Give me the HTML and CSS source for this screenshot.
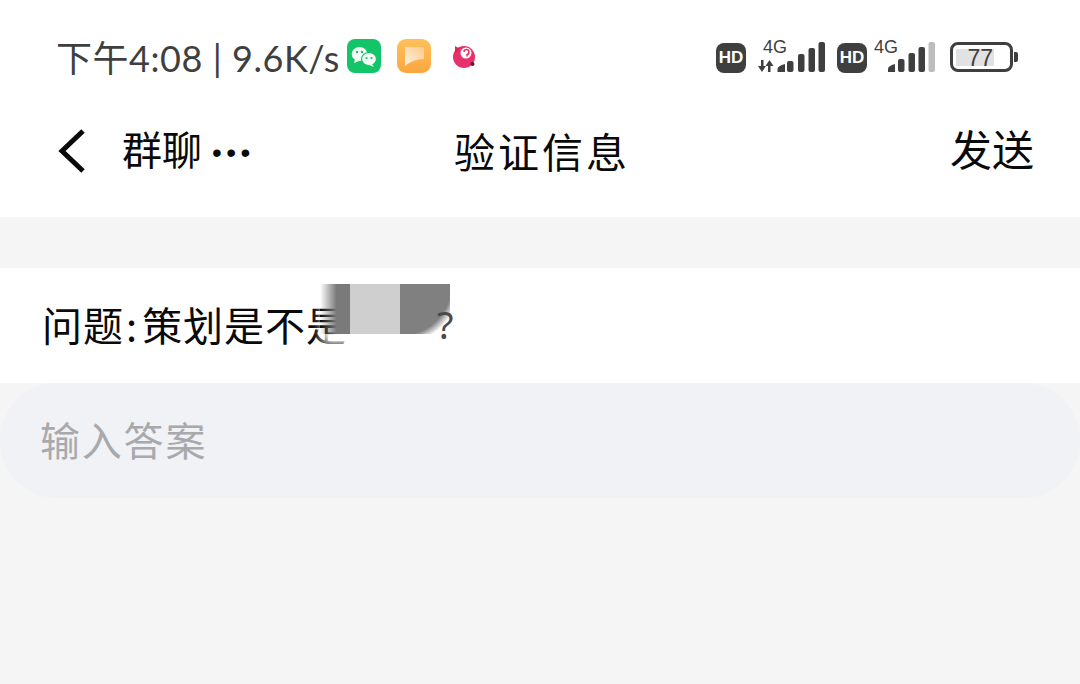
FILE: index.html
```html
<!DOCTYPE html>
<html>

<head>
    <title>验证信息</title>
    <meta name="viewport" content="width=device-width, initial-scale=1.0">
    <link rel="stylesheet" href="styles.css">
</head>

<body>
    <div class="status-bar">
        <div class="status-left">
            <span class="status-time">下午4:08 | 9.6K/s</span>
            <svg class="app-icon" width="36" height="36" viewBox="0 0 36 36">
                <rect x="1" y="1" width="34" height="34" rx="8" fill="#14c468"/>
                <ellipse cx="13.500" cy="16" rx="7.800" ry="7" fill="#f4fbf6"/>
                <path d="M9 21l-1 4 5-2z" fill="#f4fbf6"/>
                <ellipse cx="23" cy="21" rx="7.500" ry="6.500" fill="#f4fbf6" stroke="#14c468" stroke-width="1.200"/>
                <path d="M26 26l2 3-5-2z" fill="#f4fbf6"/>
                <circle cx="11" cy="14" r="1.200" fill="#14c468"/>
                <circle cx="16" cy="14" r="1.200" fill="#14c468"/>
                <circle cx="20.500" cy="20" r="1.100" fill="#14c468"/>
                <circle cx="25.500" cy="20" r="1.100" fill="#14c468"/>
            </svg>
            <svg class="app-icon notes-icon" width="36" height="36" viewBox="0 0 36 36">
                <defs>
                    <linearGradient id="notesBg" x1="0" y1="0" x2="0" y2="1">
                        <stop offset="0" stop-color="#fdc15a"/>
                        <stop offset="1" stop-color="#fda63f"/>
                    </linearGradient>
                    <linearGradient id="notesPage" x1="1" y1="0" x2="0" y2="1">
                        <stop offset="0" stop-color="#fbc98a"/>
                        <stop offset="1" stop-color="#fff3e0"/>
                    </linearGradient>
                </defs>
                <rect x="1" y="1" width="34" height="34" rx="9" fill="url(#notesBg)"/>
                <path d="M9 9h19v12c-8 0-14 3-19 7z" fill="url(#notesPage)"/>
            </svg>
            <svg class="app-icon bird-icon" width="26" height="28" viewBox="0 0 26 28">
                <circle cx="12" cy="15" r="11" fill="#e8306a"/>
                <path d="M3 4l5 3-5 5z" fill="#d92a4e"/>
                <circle cx="14" cy="11" r="5.500" fill="#fff"/>
                <path d="M12 10a2.500 2.500 0 1 1 3 2.500v2" fill="none" stroke="#e8306a" stroke-width="1.500"/>
                <circle cx="20.500" cy="22" r="2" fill="#5a1a38"/>
            </svg>
        </div>
        <div class="status-right">
            <span class="hd-badge">HD</span>
            <div class="signal">
                <span class="signal-label">4G</span>
                <svg width="68" height="32" viewBox="0 0 68 32">
                    <path d="M3 19h2.500v6H8l-4 6-4-6h3z" fill="#3f3f3f"/>
                    <path d="M11.500 19l4 6h-3v6H10v-6H7.500z" fill="#3f3f3f"/>
                    <path d="M19.500 31v-3q0-3 7.500-5v8z" fill="#3f3f3f"/>
                    <rect x="29" y="20" width="6.500" height="11" rx="2" fill="#3f3f3f"/>
                    <rect x="40" y="13" width="6.500" height="18" rx="2" fill="#3f3f3f"/>
                    <rect x="50.500" y="7" width="6.500" height="24" rx="2" fill="#3f3f3f"/>
                    <rect x="60.500" y="1" width="6.500" height="30" rx="2" fill="#3f3f3f"/>
                </svg>
            </div>
            <span class="hd-badge">HD</span>
            <div class="signal signal-short">
                <span class="signal-label">4G</span>
                <svg width="48" height="32" viewBox="0 0 48 32">
                    <path d="M1 31v-3q0-3 7-5v8z" fill="#3f3f3f"/>
                    <rect x="11" y="18" width="6.500" height="13" rx="2" fill="#3f3f3f"/>
                    <rect x="21.500" y="12" width="6.500" height="19" rx="2" fill="#3f3f3f"/>
                    <rect x="31.500" y="6" width="6.500" height="25" rx="2" fill="#3f3f3f"/>
                    <rect x="41.500" y="1" width="6.500" height="30" rx="2" fill="#bdbdbd"/>
                </svg>
            </div>
            <div class="battery">
                <div class="battery-body"><span class="battery-level">77</span></div>
                <div class="battery-tip"></div>
            </div>
        </div>
    </div>

    <div class="nav-bar">
        <div class="nav-back">
            <svg width="30" height="46" viewBox="0 0 30 46">
                <path d="M25 3L4 23l21 20" fill="none" stroke="#0a0a0a" stroke-width="5"/>
            </svg>
            <span class="nav-back-text">群聊<span class="nav-dots">•••</span></span>
        </div>
        <div class="nav-title">验证信息</div>
        <div class="nav-action">发送</div>
    </div>

    <div class="question-row">
        <span class="question-text">问题<span class="question-colon">:</span>策划是不是</span><span class="question-mark">?</span>
        <div class="redaction">
            <div class="redaction-left"></div>
            <div class="redaction-mid"></div>
            <div class="redaction-right"></div>
        </div>
    </div>

    <div class="answer-box">输入答案</div>
</body>

</html>
```

FILE: styles.css
```css
body {
    margin: 0;
    padding: 0;
    height: 684px;
    overflow: hidden;
    background-color: #f5f5f5;
    font-family: "Noto Sans CJK SC", "Noto Sans", sans-serif;
    color: #0a0a0a;
}

.status-bar {
    height: 100px;
    padding: 16px 62px 0 56px;
    box-sizing: border-box;
    background-color: #fff;
    display: flex;
    justify-content: space-between;
    align-items: center;
}

.status-left {
    display: flex;
    align-items: center;
}

.status-time {
    font-family: "Lato", "Noto Sans CJK SC", sans-serif;
    font-size: 36px;
    line-height: 44px;
    color: #3f3f3f;
    letter-spacing: 0.55px;
    white-space: nowrap;
    margin-right: 6px;
}

.app-icon {
    display: block;
    margin-top: -4px;
}

.notes-icon {
    margin-left: 14px;
}

.bird-icon {
    margin-left: 20px;
}

.status-right {
    display: flex;
    align-items: center;
}

.hd-badge {
    width: 30px;
    height: 30px;
    border-radius: 8px;
    background-color: #3f3f3f;
    color: #fff;
    font-family: "Liberation Sans", sans-serif;
    font-weight: bold;
    font-size: 17px;
    line-height: 30px;
    text-align: center;
}

.signal {
    position: relative;
    width: 68px;
    height: 32px;
    margin: -2px 11px 0 12px;
}

.signal svg {
    display: block;
}

.signal-label {
    position: absolute;
    left: 5px;
    top: -3px;
    font-family: "Liberation Sans", sans-serif;
    font-size: 18px;
    line-height: 18px;
    color: #3f3f3f;
}

.signal-short {
    width: 48px;
    margin: -2px 15px 0 20px;
}

.signal-short .signal-label {
    left: -13px;
}

.battery {
    display: flex;
    align-items: center;
    margin-top: -2px;
}

.battery-body {
    width: 63px;
    height: 30px;
    box-sizing: border-box;
    border: 3px solid #3f3f3f;
    border-radius: 8px;
    padding: 4px 0 3px 3px;
}

.battery-level {
    display: block;
    width: 38px;
    height: 17px;
    box-sizing: border-box;
    padding-right: 1px;
    background-color: #e2e2e2;
    font-family: "Liberation Sans", sans-serif;
    font-size: 23px;
    line-height: 18px;
    text-align: right;
    color: #3f3f3f;
}

.battery-tip {
    width: 4px;
    height: 10px;
    margin-left: 1px;
    background-color: #3f3f3f;
    border-radius: 0 2px 2px 0;
}

.nav-bar {
    height: 117px;
    background-color: #fff;
    position: relative;
    display: flex;
    justify-content: space-between;
    align-items: center;
    padding: 0 46px 16px 58px;
    box-sizing: border-box;
}

.nav-back {
    display: flex;
    align-items: center;
}

.nav-back-text {
    font-size: 40px;
    line-height: 56px;
    margin-left: 34px;
}

.nav-dots {
    font-family: "Liberation Sans", sans-serif;
    font-size: 28px;
    letter-spacing: 4.500px;
    vertical-align: 3px;
    margin-left: 10px;
}

.nav-title {
    position: absolute;
    left: 4px;
    right: 0;
    top: 22px;
    text-align: center;
    font-size: 41px;
    line-height: 56px;
    letter-spacing: 3px;
}

.nav-action {
    font-size: 42px;
    line-height: 56px;
    margin-top: -6px;
}

.question-row {
    margin-top: 51px;
    height: 115px;
    background-color: #fff;
    padding-left: 42px;
    position: relative;
    font-size: 40px;
    line-height: 113px;
    white-space: nowrap;
}

.question-text {
    letter-spacing: 1px;
}

.question-colon {
    margin: 0 4px 0 2px;
}

.question-mark {
    position: absolute;
    left: 437px;
    top: 0;
    z-index: 1;
    font-family: "Noto Sans", sans-serif;
    font-size: 38px;
    color: #4a4a4a;
}

.redaction {
    position: absolute;
    left: 320px;
    top: 16px;
    width: 130px;
    height: 50px;
    display: flex;
    box-shadow: 0 12px 10px -2px #fff;
}

.redaction-left {
    width: 30px;
    background: linear-gradient(to right, rgba(128, 128, 128, 0), #7a7a7a 55%);
}

.redaction-mid {
    width: 50px;
    background-color: #cfcfcf;
}

.redaction-right {
    width: 50px;
    background: radial-gradient(circle 60px at 0 0, #808080 86%, rgba(128, 128, 128, 0) 100%);
}

.answer-box {
    height: 115px;
    background-color: #f1f2f6;
    border-radius: 57px;
    padding-left: 40px;
    box-sizing: border-box;
    font-size: 40px;
    line-height: 113px;
    letter-spacing: 1.800px;
    color: #a9a9ac;
}
```
